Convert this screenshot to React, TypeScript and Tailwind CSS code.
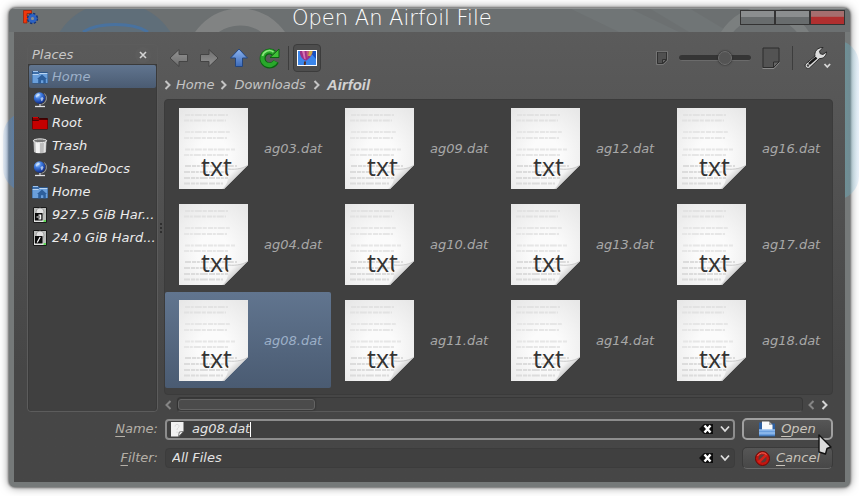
import React from "react";

type IconProps = { className?: string };

function AppLogo() {
  return (
    <svg width="16" height="15" viewBox="0 0 16 15" className="relative shrink-0">
      <path d="M0.5 0.5h8v3H4v2.500h3v3H4v4H0.5z" fill="#f0370c" stroke="#9c1d05" strokeWidth="0.7" />
      <circle cx="9.500" cy="8.500" r="4.700" fill="none" stroke="#12347c" strokeWidth="2" strokeDasharray="2.200 1.490" />
      <circle cx="9.500" cy="8.500" r="3" fill="none" stroke="#2b62c4" strokeWidth="2.800" />
      <circle cx="9.500" cy="8.500" r="1.500" fill="#8a8f94" />
    </svg>
  );
}

function FolderIcon({ home }: { home?: boolean }) {
  return (
    <svg width="16" height="16" viewBox="0 0 16 16" className="shrink-0">
      <path d="M0.5 2.5h6l1 1h8v10.5h-15z" fill={home ? "#3d6ea8" : "#8c0000"} stroke={home ? "#2d5688" : "#3c0000"} />
      <path d="M0.5 6h6l1-1h8v9h-15z" fill={home ? "#6a9fdb" : "#c40000"} />
      <path d="M0.5 5.500h6l1-1h8" fill="none" stroke={home ? "#b9d4f2" : "#4c0000"} strokeWidth="1" />
      <path d="M1 2.500h5" stroke={home ? "#9fc3ec" : "#d40000"} />
      {home && <path d="M5 10l5-4.5L15 10h-1.2v4.2h-2.5v-3H9v3H6.200V10z" fill="#2d5f9c" />}
    </svg>
  );
}

function GlobeIcon() {
  return (
    <svg width="16" height="16" viewBox="0 0 16 16" className="shrink-0">
      <defs>
        <radialGradient id="globe" cx="0.35" cy="0.25" r="0.8">
          <stop offset="0" stopColor="#a8d0ff" />
          <stop offset="0.4" stopColor="#3f7be0" />
          <stop offset="1" stopColor="#0a2480" />
        </radialGradient>
      </defs>
      <path d="M12.500 1.500a6.500 6.500 0 0 1-3 11" fill="none" stroke="#a8acb0" strokeWidth="0.800" />
      <circle cx="7.500" cy="6" r="5.700" fill="url(#globe)" />
      <path d="M3.500 4l3-2.500 1.500 1-1 1.500-1.500.6-.5 1.400zM8.500 6l2-1 1 1.500-1.500 3-1-1z" fill="#e5f1ff" opacity="0.650" />
      <path d="M3 14.500h10" stroke="#e0e2e4" strokeWidth="1.300" />
      <path d="M8 12v2" stroke="#a0a4a8" strokeWidth="2" />
    </svg>
  );
}

function TrashIcon() {
  return (
    <svg width="16" height="16" viewBox="0 0 16 16" className="shrink-0">
      <path d="M1.500 2.500L2 14c2 1.800 10 1.800 12 0l.5-11.500z" fill="#bdbdbd" />
      <path d="M3.500 4.500l.4 10.500h4V4.500z" fill="#f4f4f4" />
      <path d="M12 4.500l-.4 10h1.800l.4-10z" fill="#e2e2e2" />
      <ellipse cx="8" cy="2.800" rx="6.700" ry="1.900" fill="#777" stroke="#efefef" />
    </svg>
  );
}

function DriveIcon({ root }: { root?: boolean }) {
  return (
    <svg width="16" height="16" viewBox="0 0 16 16" className="shrink-0">
      <path d="M1.500 .5h13v15h-13z" fill="#bdbfbd" stroke="#1a1a1a" />
      <circle cx="8" cy="5" r="4" fill="#e2e2e2" stroke="#8b8b8b" strokeWidth="0.700" />
      <path d="M2 14h12" stroke="#f2f2f2" strokeWidth="1.500" />
      <path d="M11.500 14h2.500" stroke="#35d32a" strokeWidth="1.500" />
      <rect x="3" y="6" width="7.500" height="7.500" fill="#0a0a0a" />
      {root ? (
        <path d="M8.200 7l-3 5.500" stroke="#fff" strokeWidth="1.200" />
      ) : (
        <path d="M4.500 10h4M6.500 8.200h2.200v3.600H6.500" fill="none" stroke="#fff" strokeWidth="1.200" />
      )}
    </svg>
  );
}

function ArrowIcon({ turn = "", blue }: { turn?: string; blue?: boolean }) {
  const id = blue ? "arrow-blue" : "arrow-grey";
  return (
    <svg width="20" height="20" viewBox="0 0 20 20" className={turn}>
      <defs>
        <linearGradient id={id} x1="0" x2={blue ? "1" : "0"} y1="0" y2={blue ? "0" : "1"}>
          <stop offset="0" stopColor={blue ? "#8cb4f0" : "#949494"} />
          <stop offset="1" stopColor={blue ? "#3c6ab8" : "#6e6e6e"} />
        </linearGradient>
      </defs>
      <path
        d="M1 10L10 1.500v5h8.500v7H10v5z"
        fill={`url(#${id})`}
        stroke={blue ? "#24467e" : "#444444"}
        strokeWidth="1"
        strokeLinejoin="round"
      />
    </svg>
  );
}

function ReloadIcon() {
  return (
    <svg width="22" height="22" viewBox="0 0 22 22">
      <path d="M18 14.500A7 7 0 1 1 16 6" fill="none" stroke="#0a6410" strokeWidth="6" />
      <path d="M12 10.500h9V2z" fill="#3fbf36" stroke="#0a6410" strokeLinejoin="round" />
      <path d="M17.500 14.500A7 7 0 1 1 16 6" fill="none" stroke="#29a82b" strokeWidth="4.200" />
      <path d="M4.500 9A7 7 0 0 1 15.500 5" fill="none" stroke="#8be67c" strokeWidth="1.600" />
    </svg>
  );
}

function BalloonIcon() {
  return (
    <svg width="20" height="16" viewBox="0 0 20 16">
      <rect width="20" height="16" fill="#fff" />
      <rect x="1" y="1" width="18" height="14" fill="#3b86ea" />
      <path d="M12 1h7v8z" fill="#1650c0" />
      <path d="M3 1h12.500c.5 4-3 7-6 9.500H8C4.500 8.500 2.500 5 3 1z" fill="#9c2f86" />
      <path d="M5 1h2.500l1.200 8.500L7 8.500z" fill="#d873b0" />
      <path d="M9.500 1H12L10 8.500z" fill="#c8587c" />
      <path d="M12 1h3.500c0 2-.8 3.500-2 5L11 6z" fill="#c9a948" />
      <path d="M7 11.500h2l-.3 3.500H6.800z" fill="#5b2c1d" />
    </svg>
  );
}

function SheetIcon({ large }: { large?: boolean }) {
  return large ? (
    <svg width="18" height="22" viewBox="0 0 18 22" className="shrink-0">
      <path d="M1 1h16v14l-5.500 5.500H1z" fill="#535353" stroke="#2d2d2d" />
      <path d="M.5 21.500h11.500l5.500-6" fill="none" stroke="#8a8a8a" />
      <path d="M11.500 20.500V15H17z" fill="#666" stroke="#2d2d2d" />
    </svg>
  ) : (
    <svg width="12" height="14" viewBox="0 0 12 14" className="shrink-0">
      <path d="M1.500 1h9v8l-3.500 3.500H1.500z" fill="#505050" stroke="#303030" />
      <path d="M.5 .5v13H7.500l4-4V.5z" fill="none" stroke="#7c7c7c" strokeWidth="0.800" />
      <path d="M6.500 12.500V8.500h4z" fill="#666" stroke="#303030" />
    </svg>
  );
}

function WrenchIcon() {
  return (
    <svg width="27" height="24" viewBox="0 0 27 24">
      <path
        d="M1.500 18L11 10C10 6 13 1.500 19 1.500l-3.500 3.700.8 2.600 2.700.6 3.500-2.500C22.500 9.500 19.500 13 15.500 12.500L5.500 22c-2.500 1.500-5.500-1.500-4-4z"
        fill="#dcdcdc"
        stroke="#292929"
      />
      <path d="M5 18L12.500 11.500" stroke="#191919" strokeWidth="2.600" />
      <circle cx="4" cy="19.500" r="1.200" fill="#444" />
      <path d="M20.500 18l2.800 3 2.800-3" fill="none" stroke="#d8d8d8" strokeWidth="1.800" />
    </svg>
  );
}

function Chevron({ className = "" }: IconProps) {
  return (
    <svg width="8" height="10" viewBox="0 0 8 10" className={`shrink-0 ${className}`}>
      <path d="M1.500 1l4 4-4 4" fill="none" stroke="currentColor" strokeWidth="2" />
    </svg>
  );
}

function DownIcon({ className = "" }: IconProps) {
  return (
    <svg width="10" height="8" viewBox="0 0 10 8" className={`shrink-0 ${className}`}>
      <path d="M1 1.500L5 6l4-4.500" fill="none" stroke="#dedede" strokeWidth="1.800" />
    </svg>
  );
}

function ClearIcon() {
  return (
    <svg width="14" height="10" viewBox="0 0 14 10">
      <path d="M0 5L5 0h9v10H5z" fill="#0d0d0d" />
      <path d="M5.500 1.500l6 7M11.500 1.500l-6 7" stroke="#fff" strokeWidth="2.400" />
    </svg>
  );
}

function UnknownFileIcon() {
  return (
    <svg width="13" height="15" viewBox="0 0 13 15" className="shrink-0">
      <path d="M0 0h12.500v9.500L8 14.500H0z" fill="#f1f1f1" />
      <path d="M4 4.500c0-3 4.500-2.500 4 0-.3 1.500-2 1.500-2 3.500M6 9.500v1.500" fill="none" stroke="#d8d8d8" />
      <path d="M7.500 14.500l.8-4.500 4.200-.5z" fill="#fff" stroke="#454545" strokeWidth="0.700" />
    </svg>
  );
}

function OpenFolderIcon() {
  return (
    <svg width="16" height="16" viewBox="0 0 16 16" className="shrink-0">
      <path d="M0 1.500h5l1 1h10V12H0z" fill="#2d5fa0" />
      <path d="M3 .5h7l3.500 3.500V11H3z" fill="#fafafa" />
      <path d="M10 .5V4h3.500z" fill="#a9a9a9" />
      <path d="M0 8.500h16v6.500H0z" fill="#699ede" />
      <path d="M0 9h16M0 12h16" stroke="#a9ccf5" />
      <path d="M0 15h16" stroke="#2d5f9c" />
    </svg>
  );
}

function ForbiddenIcon() {
  return (
    <svg width="15" height="15" viewBox="0 0 15 15" className="shrink-0">
      <circle cx="7.500" cy="7.500" r="7" fill="#c4150f" stroke="#6d0704" />
      <circle cx="7.500" cy="7.500" r="4" fill="#5c3a38" />
      <path d="M3.500 11.500l8-8" stroke="#d62018" strokeWidth="2.600" />
      <path d="M2.500 5a5.600 5.600 0 0 1 9-1.500" fill="none" stroke="#ee6a5e" />
    </svg>
  );
}

function TextFile() {
  return (
    <span className="relative block h-[81px] w-[69px] shrink-0">
      <svg width="69" height="81" viewBox="0 0 69 81" className="absolute inset-0">
        <defs>
          <radialGradient id="paper" cx="0.5" cy="0.6" r="0.75">
            <stop offset="0.3" stopColor="#fbfbfb" />
            <stop offset="1" stopColor="#e7e7e7" />
          </radialGradient>
        </defs>
        <path d="M0 0h69v57L45 81H0z" fill="url(#paper)" />
        <g fill="none" stroke="#e6e6e6" strokeWidth="2" strokeDasharray="5 .8 3 1 7 1 4 1.200">
          <path d="M6 7h43M5 12.500h42" stroke="#e2e2e2" />
          <path d="M6 24h46M5 30h43" />
          <path d="M6 41.500h50M5 47h44" />
        </g>
        <g fill="none" stroke="#dcdcdc" strokeWidth="2" strokeDasharray="6 1 4 .8 3 1 8 1.200">
          <path d="M6 58h52M5 64h48M5 70h44M5 75.500h39" />
        </g>
      </svg>
      <span className="absolute top-[41px] left-[22px] font-['Open_Sans',sans-serif] text-[25px] leading-[34px] text-[#333] not-italic">
        txt
      </span>
      <svg width="69" height="81" viewBox="0 0 69 81" className="absolute inset-0">
        <defs>
          <linearGradient id="fold" x1="0" y1="0" x2="0.7" y2="0.7">
            <stop offset="0" stopColor="#fff" />
            <stop offset="0.500" stopColor="#f4f4f4" />
            <stop offset="1" stopColor="#b4b4b4" />
          </linearGradient>
        </defs>
        <path d="M43 81c6-4 7-12 6-20 9 1 16-1 20-4L45 81z" fill="url(#fold)" />
        <path d="M49 61c9 1 16-1 20-4" fill="none" stroke="#c9c9c9" />
      </svg>
    </span>
  );
}

const places = [
  { name: "Home", icon: <FolderIcon home />, selected: true },
  { name: "Network", icon: <GlobeIcon /> },
  { name: "Root", icon: <FolderIcon /> },
  { name: "Trash", icon: <TrashIcon /> },
  { name: "SharedDocs", icon: <GlobeIcon /> },
  { name: "Home", icon: <FolderIcon home /> },
  { name: "927.5 GiB Har...", icon: <DriveIcon /> },
  { name: "24.0 GiB Hard...", icon: <DriveIcon root /> },
];

const files = [
  "ag03.dat", "ag04.dat", "ag08.dat",
  "ag09.dat", "ag10.dat", "ag11.dat",
  "ag12.dat", "ag13.dat", "ag14.dat",
  "ag16.dat", "ag17.dat", "ag18.dat",
];

const selectedFill = "bg-linear-to-b from-[#61758f] to-[#4a5b72]";
const toolButton = "flex h-7 w-[30px] items-center justify-center";

function TitleBar() {
  return (
    <header className="relative flex h-6 items-start pr-[5px] pl-[14px]">
      <svg className="absolute inset-0 h-full w-full rounded-t-md bg-[#6c7071]" viewBox="0 0 841 24" preserveAspectRatio="xMinYMin slice">
        <circle cx="106" cy="60" r="66" fill="#5f6e79" />
        <path d="M74 24c15-10 50-10 65 0" fill="none" stroke="#49729f" strokeWidth="3" />
        <circle cx="231" cy="55" r="46" fill="none" stroke="#818383" strokeWidth="17" />
        <path d="M560 0h60l50 24h-60zM640 0h40l40 24h-40z" fill="#707576" />
        <circle cx="756" cy="50" r="46" fill="none" stroke="#7b7f7f" strokeWidth="10" />
        <path d="M0 .5h841" stroke="#8f9292" />
      </svg>
      <div className="relative pt-[2px]">
        <AppLogo />
      </div>
      <h1 className="relative pl-[253px] font-['DejaVu_Sans',sans-serif] text-[21px] leading-[20px] font-extralight whitespace-nowrap text-white not-italic">
        Open An Airfoil File
      </h1>
      <div className="relative ml-auto flex pt-[2px]">
        <button aria-label="Minimize" className="h-[15px] w-[35px] border border-[#333] bg-linear-to-b from-[#8b8e8f] from-45% to-[#686c6d] to-50%" />
        <button aria-label="Maximize" className="h-[15px] w-[35px] border border-[#333] bg-linear-to-b from-[#8b8e8f] from-45% to-[#686c6d] to-50%" />
        <button aria-label="Close" className="h-[15px] w-[35px] border border-[#333] bg-linear-to-b from-[#a56e6e] from-40% to-[#b02f2f] to-50%" />
      </div>
    </header>
  );
}

function Places() {
  return (
    <aside className="flex w-[131px] shrink-0 flex-col rounded-sm border border-[#5c5c5c]">
      <div className="flex h-[19px] items-center justify-between pr-[6px] pl-1 text-[#c8c8c8]">
        <h2>Places</h2>
        <button aria-label="Close places" className="flex size-4 items-center justify-center rounded-full bg-[#5c5c5c]">
          <svg width="8" height="8" viewBox="0 0 8 8">
            <path d="M1 1l6 6M7 1L1 7" stroke="#d4d4d4" strokeWidth="1.600" />
          </svg>
        </button>
      </div>
      <ul className="flex-1 rounded-b-sm border-x border-t border-[#3a3a3a] bg-[#404040]">
        {places.map((place, i) => (
          <li
            key={i}
            className={`flex h-[23px] items-center gap-1 rounded-[2px] pl-[3px] whitespace-nowrap ${
              place.selected ? `${selectedFill} text-[#9db0c8]` : "text-[#ececec]"
            }`}
          >
            {place.icon}
            {place.name}
          </li>
        ))}
      </ul>
    </aside>
  );
}

function Toolbar() {
  return (
    <div className="flex h-7 shrink-0 items-center">
      <button aria-label="Back" className={toolButton}><ArrowIcon /></button>
      <button aria-label="Forward" className={toolButton}><ArrowIcon turn="rotate-180" /></button>
      <button aria-label="Parent folder" className={toolButton}><ArrowIcon turn="rotate-90" blue /></button>
      <button aria-label="Reload" className={toolButton}><ReloadIcon /></button>
      <span className="mx-1 h-6 w-px bg-[#3d3d3d]" />
      <button aria-label="Preview" className="flex size-7 items-center justify-center rounded border border-[#3c3c3c] bg-[#4d4d4d]">
        <BalloonIcon />
      </button>
      <div className="ml-auto flex items-center gap-[11px]">
        <SheetIcon />
        <input
          type="range"
          aria-label="Icon size"
          defaultValue={68}
          className="h-4 w-[72px] appearance-none bg-transparent [&::-webkit-slider-runnable-track]:h-[6px] [&::-webkit-slider-runnable-track]:rounded-full [&::-webkit-slider-runnable-track]:border-b [&::-webkit-slider-runnable-track]:border-[#6b6b6b] [&::-webkit-slider-runnable-track]:bg-[#353535] [&::-webkit-slider-thumb]:-mt-1 [&::-webkit-slider-thumb]:size-[14px] [&::-webkit-slider-thumb]:appearance-none [&::-webkit-slider-thumb]:rounded-full [&::-webkit-slider-thumb]:border [&::-webkit-slider-thumb]:border-[#6e6e6e] [&::-webkit-slider-thumb]:bg-[#545454] [&::-webkit-slider-thumb]:shadow-[0_0_2px_#222]"
        />
        <SheetIcon large />
      </div>
      <span className="ml-3 h-6 w-px bg-[#3d3d3d]" />
      <button aria-label="Options" className="mr-[2px] ml-[11px]"><WrenchIcon /></button>
    </div>
  );
}

function Browser() {
  return (
    <section className="flex min-w-0 flex-1 flex-col">
      <Toolbar />
      <nav aria-label="Path" className="mb-[2px] flex h-[25px] shrink-0 items-center text-[#c4c4c4]">
        <Chevron />
        <a href="#home" className="ml-1">Home</a>
        <Chevron className="ml-[6px]" />
        <a href="#downloads" className="ml-[6px]">Downloads</a>
        <Chevron className="ml-[7px]" />
        <a href="#airfoil" className="ml-[6px] font-['Liberation_Sans',sans-serif] text-[15px] font-bold text-[#d2d2d2]">Airfoil</a>
      </nav>
      <ul className="grid min-h-0 flex-1 auto-cols-[166px] grid-flow-col grid-rows-[repeat(3,96px)] content-start overflow-hidden rounded border border-[#3b3b3b] bg-[#404040]">
        {files.map((name) => (
          <li
            key={name}
            className={`flex items-center gap-4 rounded-[2px] pl-[14px] ${
              name === "ag08.dat" ? `${selectedFill} text-[#9db0c8]` : "text-[#a8a8a8]"
            }`}
          >
            <TextFile />
            <span className="pt-[2px]">{name}</span>
          </li>
        ))}
      </ul>
      <div className="mt-[2px] flex h-[15px] shrink-0 items-center text-[#d4d4d4]">
        <button aria-label="Scroll to start" className="w-[13px] text-[#858585]"><Chevron className="rotate-180" /></button>
        <div className="flex h-full flex-1 items-center rounded border border-[#383838] border-b-[#5a5a5a] bg-[#424242]">
          <div className="h-[11px] w-[137px] rounded-[3px] border border-[#646464] bg-[#4b4b4b] shadow-[0_0_2px_#222]" />
        </div>
        <button aria-label="Scroll left" className="ml-1 w-3 text-[#858585]"><Chevron className="rotate-180" /></button>
        <button aria-label="Scroll right" className="ml-[2px] w-3"><Chevron /></button>
      </div>
    </section>
  );
}

function FileForm() {
  const actionButton = "relative flex h-[22px] items-center justify-center gap-[6px] rounded-[5px] border bg-linear-to-b from-[#565656] to-[#474747] text-[#c9c4bb]";
  return (
    <form className="mt-[6px] grid shrink-0 grid-cols-[131px_1fr_91px] items-center gap-x-[7px] gap-y-[7px]" onSubmit={(e) => e.preventDefault()}>
      <label htmlFor="name" className="text-right text-[#b5b0a8]">
        <u className="underline-offset-[3px]">N</u>ame:
      </label>
      <div className="flex h-[21px] items-center rounded border-2 border-[#8d8d8d] bg-[#404040] pr-[3px] pl-1">
        <UnknownFileIcon />
        <input id="name" defaultValue="ag08.dat" className="ml-2 field-sizing-content min-w-0 bg-transparent text-[#e4e4e4] italic outline-none" />
        <span className="h-[15px] w-px bg-white" />
        <button type="button" aria-label="Clear name" className="ml-auto"><ClearIcon /></button>
        <button type="button" aria-label="Show names" className="ml-[7px]"><DownIcon /></button>
      </div>
      <button type="submit" className={`${actionButton} border-2 border-[#a0a0a0]`}>
        <OpenFolderIcon />
        <span><u className="underline-offset-[3px]">O</u>pen</span>
        <svg width="15" height="23" viewBox="0 0 15 23" className="absolute top-[14px] left-[74px] z-10">
          <path d="M1 1l12 12-4 1.500-1.500 5.500L1 18z" fill="#dcdcdc" stroke="#111" strokeWidth="1.400" strokeLinejoin="round" />
        </svg>
      </button>
      <label htmlFor="filter" className="text-right text-[#b5b0a8]">
        <u className="underline-offset-[3px]">F</u>ilter:
      </label>
      <div className="relative flex h-5 items-center rounded border border-[#3c3c3c] bg-[#404040] pr-1 pl-[6px]">
        <select id="filter" className="h-full flex-1 appearance-none bg-transparent text-[#e4e4e4] italic outline-none">
          <option>All Files</option>
        </select>
        <button type="button" aria-label="Clear filter"><ClearIcon /></button>
        <DownIcon className="pointer-events-none ml-[7px]" />
      </div>
      <button type="button" className={`${actionButton} border-[#3a3a3a] border-b-[#6a6a6a]`}>
        <ForbiddenIcon />
        <span><u className="underline-offset-[3px]">C</u>ancel</span>
      </button>
    </form>
  );
}

export default function App() {
  return (
    <div className="flex h-screen overflow-hidden bg-white pt-2 pr-[9px] pb-[9px] pl-[9px] font-['DejaVu_Sans',sans-serif] text-[13px] leading-[16px] italic">
      <div className="relative flex min-w-0 flex-1 flex-col rounded-md bg-[#757979] shadow-[0_0_2px_1px_rgba(0,0,0,0.4),0_0_10px_rgba(0,0,0,0.5)]">
        <div className="absolute top-[104px] -left-[6px] h-20 w-6 rounded-l-full bg-linear-to-r from-[#3f84d8]/10 to-[#3f84d8]/80" />
        <div className="absolute top-8 -right-[9px] h-[160px] w-6 rounded-r-full bg-linear-to-l from-[#7db0e8]/15 to-[#5fb0b8]/60" />
        <TitleBar />
        <main className="relative mx-[5px] mb-[5px] flex min-h-0 flex-1 flex-col bg-linear-to-b from-[#5b5b5b] to-[#464646] to-75% pt-3 pr-3 pb-[13px] pl-[13px]">
          <div className="flex min-h-0 flex-1">
            <Places />
            <div className="flex w-[6px] shrink-0 flex-col items-center justify-center gap-[2px]">
              <span className="size-[2px] bg-[#2f2f2f]" />
              <span className="size-[2px] bg-[#2f2f2f]" />
              <span className="size-[2px] bg-[#2f2f2f]" />
            </div>
            <Browser />
          </div>
          <FileForm />
        </main>
      </div>
    </div>
  );
}
